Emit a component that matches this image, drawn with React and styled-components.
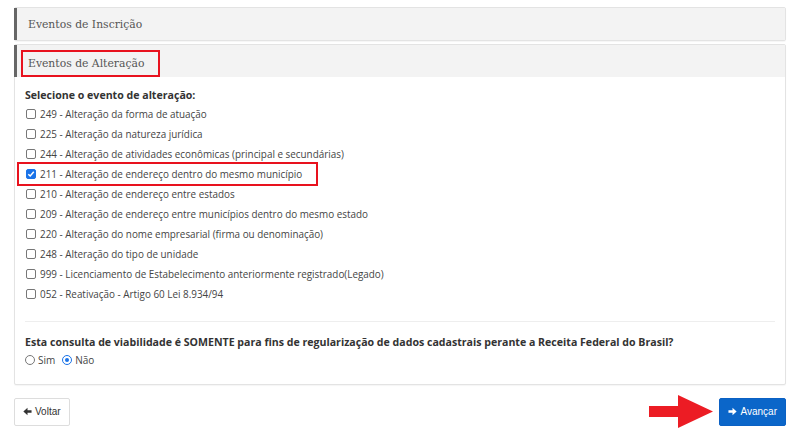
import React from 'react';
import styled, { createGlobalStyle } from 'styled-components';

const Global = createGlobalStyle`
  body {
    margin: 0;
    background: #ffffff;
    font-family: "Open Sans", "Liberation Sans", sans-serif;
    color: #333;
  }
`;

const Page = styled.div`
  padding: 7px 14px 0 14px;
  width: 772px;
`;

const Panel = styled.section`
  border: 1px solid #e3e3e3;
  border-radius: 2px;
  margin-bottom: 3px;
  background: #fff;
  box-shadow: 0 1px 1px rgba(0, 0, 0, 0.04);
`;

const PanelHead = styled.div`
  background: #f3f3f3;
  height: 32px;
  display: flex;
  align-items: center;
  margin-left: -1px;
  border-left: 3px solid #666;
  padding-left: 4px;
`;

const Title = styled.h3`
  margin: ${p => (p.$marked ? '4px 0 0 0' : '0')};
  font-family: "DejaVu Serif", "Liberation Serif", serif;
  font-weight: normal;
  font-size: 10.8px;
  color: #555;
  height: 27px;
  box-sizing: border-box;
  display: flex;
  align-items: center;
  padding: 0 14px 0 5px;
  border: 2px solid ${p => (p.$marked ? '#e8121e' : 'transparent')};
`;

const Body = styled.div`
  padding: 11px 10px 17px 10px;
`;

const Label = styled.div`
  font-weight: bold;
  font-size: 10.6px;
  color: #333;
  margin-bottom: 2px;
`;

const Row = styled.label`
  display: flex;
  align-items: center;
  gap: 4px;
  font-size: 9.9px;
  color: #444;
  width: fit-content;
  box-sizing: border-box;
  height: ${p => (p.$marked ? '24px' : '20px')};
  margin: ${p => (p.$marked ? '-2px 0 -2px -8px' : '0')};
  padding: ${p => (p.$marked ? '0 14px 0 6px' : '0')};
  border: ${p => (p.$marked ? '2px solid #e8121e' : 'none')};
`;

const Box = styled.span`
  width: 10px;
  height: 10px;
  border: 1px solid #777;
  border-radius: 2px;
  margin-left: 1px;
  background: ${p => (p.$on ? '#1a73e8' : '#fff')};
  border-color: ${p => (p.$on ? '#1a73e8' : '#777')};
  display: inline-flex;
  align-items: center;
  justify-content: center;
  box-sizing: border-box;
`;

const Divider = styled.hr`
  border: none;
  border-top: 1px solid #eee;
  margin: 17px 0 13px 0;
`;

const Question = styled.div`
  font-weight: bold;
  font-size: 10.6px;
  color: #333;
  margin-bottom: 4px;
`;

const Radios = styled.div`
  display: flex;
  gap: 7px;
  font-size: 10px;
  color: #444;
`;

const Radio = styled.span`
  display: inline-flex;
  align-items: center;
  gap: 3px;
`;

const Dot = styled.span`
  width: 10px;
  height: 10px;
  border-radius: 50%;
  box-sizing: border-box;
  border: 1px solid ${p => (p.$on ? '#1a73e8' : '#777')};
  display: inline-flex;
  align-items: center;
  justify-content: center;
  &::after {
    content: '';
    width: 4px;
    height: 4px;
    border-radius: 50%;
    background: ${p => (p.$on ? '#1a73e8' : 'transparent')};
  }
`;

const Footer = styled.div`
  display: flex;
  justify-content: space-between;
  align-items: center;
  margin-top: 10px;
`;

const Button = styled.button`
  height: 28px;
  padding: 0 8px;
  border-radius: 2px;
  font-family: "Liberation Sans", Arial, sans-serif;
  font-size: 10px;
  display: inline-flex;
  align-items: center;
  gap: 3px;
  border: 1px solid ${p => (p.$primary ? '#0b61c4' : '#ddd')};
  background: ${p => (p.$primary ? '#0b66c9' : '#fff')};
  color: ${p => (p.$primary ? '#fff' : '#333')};
`;

const Right = styled.div`
  display: flex;
  align-items: center;
  gap: 6px;
`;

const Check = () => (
  <svg width="8" height="8" viewBox="0 0 8 8">
    <path d="M1.3 4.2 L3.2 6 L6.8 1.8" fill="none" stroke="#fff" strokeWidth="1.5" />
  </svg>
);

const ArrowIcon = ({ dir }) => (
  <svg width="9" height="9" viewBox="0 0 10 10" style={{ transform: dir === 'left' ? 'scaleX(-1)' : 'none' }}>
    <path d="M0.5 3.6 H5 V0.8 L9.6 5 L5 9.2 V6.4 H0.5 Z" fill="currentColor" />
  </svg>
);

const Pointer = styled.svg`
  flex: none;
  display: block;
`;

const BigArrow = () => (
  <Pointer width="64" height="33" viewBox="0 0 64 33">
    <path d="M0 11 H29 V0 L64 16.5 L29 33 V22 H0 Z" fill="#ec1c24" />
  </Pointer>
);

const events = [
  '249 - Alteração da forma de atuação',
  '225 - Alteração da natureza jurídica',
  '244 - Alteração de atividades econômicas (principal e secundárias)',
  '211 - Alteração de endereço dentro do mesmo município',
  '210 - Alteração de endereço entre estados',
  '209 - Alteração de endereço entre municípios dentro do mesmo estado',
  '220 - Alteração do nome empresarial (firma ou denominação)',
  '248 - Alteração do tipo de unidade',
  '999 - Licenciamento de Estabelecimento anteriormente registrado(Legado)',
  '052 - Reativação - Artigo 60 Lei 8.934/94',
];

export default function App() {
  return (
    <Page>
      <Global />
      <Panel>
        <PanelHead>
          <Title>Eventos de Inscrição</Title>
        </PanelHead>
      </Panel>
      <Panel>
        <PanelHead>
          <Title $marked>Eventos de Alteração</Title>
        </PanelHead>
        <Body>
          <Label>Selecione o evento de alteração:</Label>
          {events.map(e => {
            const on = e.startsWith('211');
            return (
              <Row key={e} $marked={on}>
                <Box $on={on}>{on && <Check />}</Box>
                {e}
              </Row>
            );
          })}
          <Divider />
          <Question>
            Esta consulta de viabilidade é SOMENTE para fins de regularização de dados cadastrais perante a Receita Federal do Brasil?
          </Question>
          <Radios>
            <Radio><Dot /> Sim</Radio>
            <Radio><Dot $on /> Não</Radio>
          </Radios>
        </Body>
      </Panel>
      <Footer>
        <Button><ArrowIcon dir="left" /> Voltar</Button>
        <Right>
          <BigArrow />
          <Button $primary><ArrowIcon /> Avançar</Button>
        </Right>
      </Footer>
    </Page>
  );
}
